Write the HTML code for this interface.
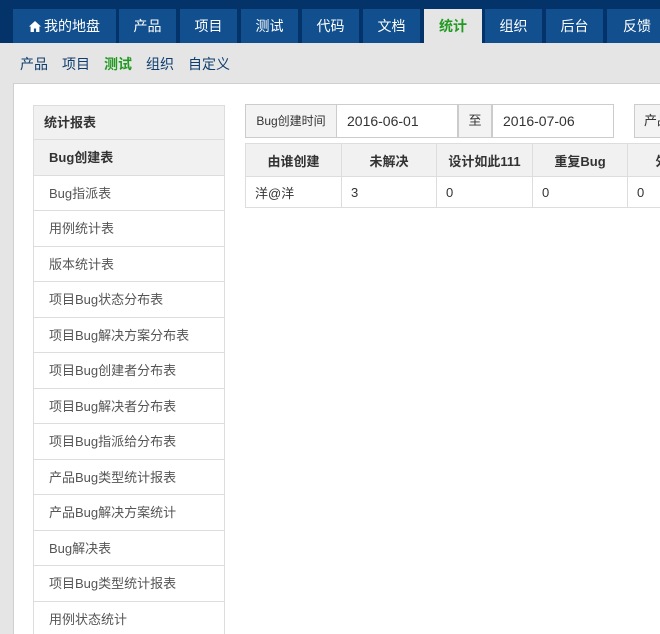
<!DOCTYPE html>
<html><head><meta charset="utf-8"><style>
*{box-sizing:border-box;margin:0;padding:0}
body{width:660px;height:634px;overflow:hidden;background:#e5e5e5;font-family:"Liberation Sans","Noto Sans CJK SC",sans-serif;font-size:13px;color:#333;position:relative}
#w{position:absolute;left:0;top:0;width:660px;height:634px;overflow:hidden}
.top{position:absolute;left:0;top:0;width:660px;height:43px;background:#04336a}
.tab{position:absolute;top:9px;height:34px;background:#114f8e;color:#fff;font-size:14px;line-height:34px;text-align:center;white-space:nowrap;overflow:hidden}
.tab.act{background:#e5e5e5;color:#229a22;font-weight:bold}
.sub{position:absolute;top:54px;left:20px;font-size:14px;color:#0e3d6e;white-space:nowrap}
.sub span{margin-right:14px}
.panel{position:absolute;left:13px;top:83px;width:647px;height:551px;background:#fff;border-top:1px solid #d0d0d0;border-left:1px solid #d0d0d0}
.side{position:absolute;left:33px;top:105px;width:192px;height:529px;overflow:hidden;border:1px solid #ddd;border-bottom:none}
.side div{height:35.5px;line-height:35px;border-bottom:1px solid #ddd;padding-left:15px;color:#555}
.side .h{background:#f1f1f1;font-weight:bold;color:#333;padding-left:10px;height:34px;line-height:34px}
.side .a{background:#f1f1f1;font-weight:bold;color:#333}
.f{position:absolute;top:104px;height:34px;border:1px solid #ccc;line-height:32px;white-space:nowrap;overflow:hidden}
.tw{position:absolute;left:245px;top:143px;width:415px;height:70px;overflow:hidden}
table{border-collapse:collapse;table-layout:fixed;width:490px}
td,th{border:1px solid #ddd;padding:0 0 0 9px;text-align:left;white-space:nowrap;overflow:hidden}
th{background:#f1f1f1;text-align:center;padding:0;height:33px}
td{height:31px}
</style></head><body><div id="w">
<div class="top"></div>
<div class="tab" style="left:13px;width:103px"><svg width="12" height="11" viewBox="0 0 12 11" style="vertical-align:-1px;margin-right:3px"><path d="M6 0L0 5.5h1.6V11h3.3V7.5h2.2V11h3.3V5.5H12z" fill="#fff"/></svg>我的地盘</div>
<div class="tab" style="left:119px;width:57px">产品</div>
<div class="tab" style="left:180px;width:57px">项目</div>
<div class="tab" style="left:241px;width:57px">测试</div>
<div class="tab" style="left:302px;width:57px">代码</div>
<div class="tab" style="left:363px;width:57px">文档</div>
<div class="tab act" style="left:424px;width:58px">统计</div>
<div class="tab" style="left:485px;width:57px">组织</div>
<div class="tab" style="left:546px;width:57px">后台</div>
<div class="tab" style="left:607px;width:53px;text-align:left;padding-left:16px">反馈</div>
<div class="sub"><span>产品</span><span>项目</span><span style="color:#229a22;font-weight:bold">测试</span><span>组织</span><span>自定义</span></div>
<div class="panel"></div>
<div class="side">
<div class="h">统计报表</div>
<div class="a">Bug创建表</div>
<div>Bug指派表</div><div>用例统计表</div><div>版本统计表</div><div>项目Bug状态分布表</div><div>项目Bug解决方案分布表</div><div>项目Bug创建者分布表</div><div>项目Bug解决者分布表</div><div>项目Bug指派给分布表</div><div>产品Bug类型统计报表</div><div>产品Bug解决方案统计</div><div>Bug解决表</div><div>项目Bug类型统计报表</div><div>用例状态统计</div>
</div>
<div class="f" style="left:245px;width:92px;background:#f3f3f3;text-align:center;font-size:12px">Bug创建时间</div>
<div class="f" style="left:336px;width:122px;padding-left:10px;font-size:14px">2016-06-01</div>
<div class="f" style="left:458px;width:34px;background:#f3f3f3;text-align:center">至</div>
<div class="f" style="left:492px;width:122px;padding-left:10px;font-size:14px">2016-07-06</div>
<div class="f" style="left:634px;width:26px;background:#f3f3f3;padding-left:9px;border-right:none">产品</div>
<div class="tw"><table>
<colgroup><col style="width:96px"><col style="width:95px"><col style="width:96px"><col style="width:95px"><col style="width:108px"></colgroup>
<tr><th>由谁创建</th><th>未解决</th><th>设计如此111</th><th>重复Bug</th><th>外部原因</th></tr>
<tr><td>洋@洋</td><td>3</td><td>0</td><td>0</td><td>0</td></tr>
</table></div>
</div></body></html>
